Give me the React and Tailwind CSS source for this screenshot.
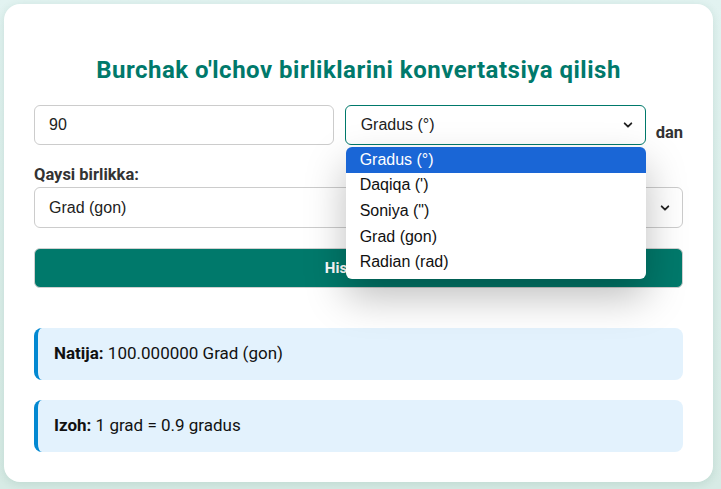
import React from "react";

const sans = "font-['Roboto','Open_Sans',sans-serif]";
const arial = "font-['Liberation_Sans',Arial,sans-serif]";

function Chevron({ className = "" }) {
  return (
    <svg viewBox="0 0 12 12" className={"w-[10px] h-[10px] " + className} fill="none">
      <path d="M2 4 L6 8 L10 4" stroke="#222" strokeWidth="2.2" strokeLinecap="round" strokeLinejoin="round" />
    </svg>
  );
}

export default function App() {
  const options = ["Gradus (°)", "Daqiqa (')", "Soniya (\")", "Grad (gon)", "Radian (rad)"];
  return (
    <div className="w-[721px] h-[489px] bg-gradient-to-b from-[#e2f3f1] to-[#d7ebe5] pt-[4px] pl-[4px] overflow-hidden">
      <div className={`w-[709px] h-[478px] bg-white rounded-[16px] shadow-[0_2px_10px_rgba(0,80,60,0.12)] px-[30px] pt-[51px] ${sans}`}>
        <h2 className="text-center text-[24px] leading-[30px] tracking-[0.5px] font-bold text-[#00796b]">
          Burchak o'lchov birliklarini konvertatsiya qilish
        </h2>

        <div className="flex items-end mt-[20px]">
          <div className={`w-[300px] h-[40px] border border-[#cccccc] rounded-[6px] px-[14px] flex items-center text-[16px] text-[#222] ${arial}`}>
            90
          </div>
          <div className="relative ml-[11px]">
            <div className={`w-[301px] h-[40px] border border-[#00796b] rounded-[6px] pl-[15px] pr-[12px] flex items-center justify-between text-[16px] text-[#222] ${arial}`}>
              <span>Gradus (°)</span>
              <Chevron />
            </div>
            <div className={`absolute left-[1px] top-[42px] w-[300px] bg-white rounded-[6px] shadow-[0_18px_40px_rgba(0,0,0,0.26)] pb-[4px] overflow-hidden z-10 text-[16px] ${arial}`}>
              {options.map((o, i) => (
                <div
                  key={o}
                  className={
                    "h-[25.6px] flex items-center pl-[14px] " +
                    (i === 0 ? "bg-[#1a66d6] text-white" : "text-[#111]")
                  }
                >
                  {o}
                </div>
              ))}
            </div>
          </div>
          <span className="ml-[10px] mb-0 text-[16.5px] leading-[24px] font-bold text-[#333]">dan</span>
        </div>

        <div className="mt-[19px] text-[16.5px] font-bold text-[#333] leading-[22px]">Qaysi birlikka:</div>
        <div className={`mt-[1px] h-[41px] border border-[#cccccc] rounded-[6px] pl-[14px] pr-[12px] flex items-center justify-between text-[16px] text-[#222] ${arial}`}>
          <span>Grad (gon)</span>
          <Chevron />
        </div>

        <button className="mt-[20px] w-full h-[40px] rounded-[6px] bg-[#00796b] text-white font-bold text-[15px] border border-[#d0d0d0]">
          Hisoblash
        </button>

        <div className="mt-[40px] h-[52px] bg-[#e3f2fd] border-l-[4px] border-[#0288d1] rounded-[8px] pl-[16px] flex items-center text-[17px] text-[#111]">
          <span><b>Natija:</b> 100.000000 Grad (gon)</span>
        </div>
        <div className="mt-[20px] h-[52px] bg-[#e3f2fd] border-l-[4px] border-[#0288d1] rounded-[8px] pl-[16px] flex items-center text-[17px] text-[#111]">
          <span><b>Izoh:</b> 1 grad = 0.9 gradus</span>
        </div>
      </div>
    </div>
  );
}
